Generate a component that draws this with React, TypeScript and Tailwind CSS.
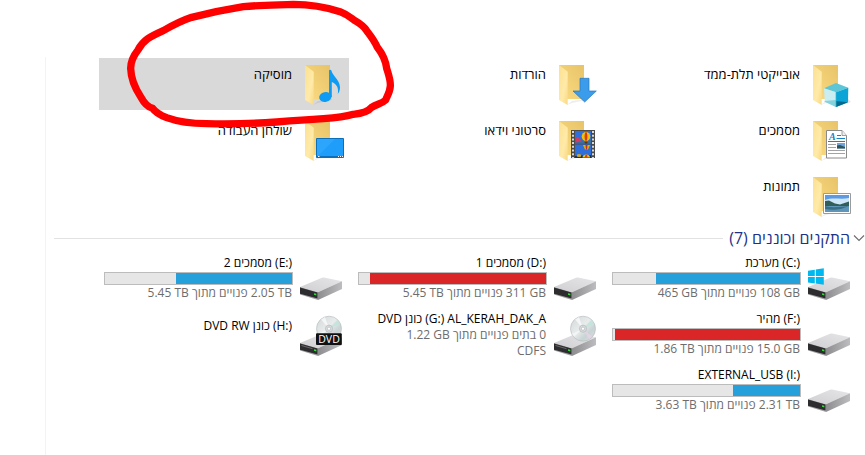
import { useState, type ReactNode } from 'react';

interface Folder {
  id: string;
  name: string;
  overlay: ReactNode;
}

interface Drive {
  id: string;
  // latin part of the label, always kept left-to-right
  label: string;
  name?: string;
  icon: ReactNode;
  free?: string;
  total?: string;
  used?: number;
  full?: boolean;
  fileSystem?: string;
}

function FolderIcon({ children }: { children: ReactNode }) {
  return (
    <svg className="size-12 shrink-0" viewBox="0 0 48 48" fill="none" direction="ltr" aria-hidden="true">
      <defs>
        <linearGradient id="folder-back" x1="1" y1="0" x2="0" y2="1">
          <stop offset="0" stopColor="#e8c368" />
          <stop offset="1" stopColor="#fbdc83" />
        </linearGradient>
        <linearGradient id="folder-flap" x1="0" y1="0" x2="1" y2="1">
          <stop offset="0" stopColor="#fbe08f" />
          <stop offset="0.6" stopColor="#ffeaa9" />
          <stop offset="1" stopColor="#f8d983" />
        </linearGradient>
      </defs>
      <path d="M16 45l5-4 14-2v1l-14 3z" fill="#000" opacity="0.07" />
      <path d="M8 5h25v34H8z" fill="url(#folder-back)" />
      <path d="M8 5l8.7 6.7V45L8 40z" fill="url(#folder-flap)" />
      {children}
    </svg>
  );
}

function CubeOverlay() {
  return (
    <g>
      <path d="M31 47l15-5-3-3z" fill="#000" opacity="0.1" />
      <path d="M31 23l12.3 4.7L31 32.3 19 28.3z" fill="#5cc5d6" />
      <path d="M19 28.3l12 4V47l-11.3-5.3z" fill="#c9edf1" />
      <path d="M43.3 27.7L31 32.3V47l12-4.7z" fill="#0aa5d6" />
      <path d="M31 41l12 1.3L31 47z" fill="#036a8f" />
      <path d="M19.5 41L31 40v7l-11.3-5.3z" fill="#83d2de" />
      <path d="M31 32.3V47" stroke="#3bb4cb" strokeWidth="0.7" />
    </g>
  );
}

function ArrowOverlay() {
  return (
    <path
      d="M29 18.3h9V31h7.3L33.7 42 22 31h7z"
      fill="#3b9cec"
      stroke="#2577bd"
      strokeWidth="0.7"
    />
  );
}

function MusicOverlay() {
  return (
    <g fill="#0c9bf5">
      <ellipse cx="28.3" cy="37" rx="6.2" ry="4.8" transform="rotate(-12 28.3 37)" />
      <path d="M32 10.5c.3-1 1.9-1 2.4 0 .6 4.5 8.6 9.5 8.6 17 0 3-1 5-2.2 6.5 1.2-6.5-1.5-10-6-12V37H32z" />
    </g>
  );
}

function DocumentOverlay() {
  return (
    <g>
      <path d="M21.5 14.5H37l4.5 5V42h-20z" fill="#fff" stroke="#8a8a8a" strokeWidth="1" />
      <path d="M37 14.5v5h4.5" fill="#eee" stroke="#8a8a8a" strokeWidth="0.8" />
      <text x="24" y="24" fontSize="10" fontFamily="Liberation Serif, serif" fontStyle="italic" fontWeight="700" fill="#1583c9">
        A
      </text>
      <path d="M32 19.5h4M31.5 22.5H40M23 25.5h17" stroke="#1583c9" strokeWidth="1" />
      <path d="M23 28.5h8M23 31.5h8M23 34.5h17M23 37.5h17" stroke="#999" strokeWidth="0.9" />
      <path d="M32 27h8v5.5h-8z" fill="#6fa3dc" />
      <path d="M32 29.5l3-.5 5 2v1.5h-8z" fill="#2c555c" />
    </g>
  );
}

function VideoOverlay() {
  return (
    <g>
      <path d="M20 14h24v28H20z" fill="#4a4a4a" />
      <path d="M24 15h16v12.5H24zM24 28.5h16V42H24z" fill="#2f6fdb" />
      <path d="M24 23c4 1 8 3 16 1v3.5H24z" fill="#3a6f9a" />
      <path d="M22 15v27M42 15v27" stroke="#e8e8e8" strokeWidth="1.8" strokeDasharray="2 1.7" />
      <ellipse cx="35" cy="20.5" rx="4.3" ry="4.5" fill="#f2c200" />
      <path d="M34.3 16.2c-1 3-1 6 0 8.5h1.4c1-2.5 1-5.500 0-8.500z" fill="#d83a1c" />
      <path d="M25 22l2.5-1 3 4.5-6 1z" fill="#cf3d66" />
      <path d="M33.5 26h3l-.5 1.5h-2z" fill="#5c3410" />
      <path d="M32 29h7l-2 4.5h-3z" fill="#e0b000" />
      <path d="M34.5 29h2l-.5 4.5h-1z" fill="#c42b1c" />
      <path d="M24 40l6-1 4 1 6-1v3H24z" fill="#17345f" />
      <path d="M31.5 41.5c0-4 7.5-4 7.5 0z" fill="#f2c200" />
      <path d="M34 41.5c0-4 2.5-4 2.5 0z" fill="#d83a1c" />
      <ellipse cx="28" cy="39.5" rx="2.3" ry="1.5" fill="#d0a720" />
    </g>
  );
}

function DesktopOverlay() {
  return (
    <g>
      <path d="M19.5 22.5h27v19h-27z" fill="#1e9dfa" stroke="#0b6fba" strokeWidth="1" />
      <path d="M20 41V23h18z" fill="#35abff" opacity="0.6" />
      <path d="M20 40.5h26" stroke="#0b6fba" strokeWidth="1" />
      <path d="M21 40.5h1.5M41 40.5h1M43 40.5h1M45 40.5h1" stroke="#fff" strokeWidth="1" />
    </g>
  );
}

function PictureOverlay() {
  return (
    <g>
      <path d="M18.5 21.5h27v20h-27z" fill="#fff" stroke="#9b9b9b" strokeWidth="1" />
      <path d="M20 23h24v17H20z" fill="#5c9be4" />
      <path d="M20 28c8-3 16 0 24-2v8H20z" fill="#cfe5f8" />
      <path d="M20 29l4-.5 6 3 5 1 6-2 3-1v5H20z" fill="#2f5f58" />
      <path d="M20 34h24v6H20z" fill="#5f95b8" />
      <path d="M20 34c6 2 14 1 24 0l-8 3c-6 1-10 1-16 0z" fill="#3b6f86" />
    </g>
  );
}

function WindowsLogo() {
  return (
    <path
      d="M3 18.7l6.8-1v6.3H3zM10.8 17.5l8-1.2V24h-8zM3 25h6.8v6.5L3 30.5zM10.8 25h8v7.8l-8-1.2z"
      fill="#00b8f0"
    />
  );
}

function DriveIcon({ variant }: { variant?: 'windows' | 'disc' | 'dvd' }) {
  const hasDisc = variant === 'disc' || variant === 'dvd';

  return (
    <svg className="mt-1.5 size-12 shrink-0" viewBox="0 0 48 48" fill="none" aria-hidden="true">
      <defs>
        <linearGradient id="drive-top" x1="0" y1="1" x2="1" y2="0">
          <stop offset="0" stopColor="#cfcfd2" />
          <stop offset="1" stopColor="#e6e6e9" />
        </linearGradient>
        <linearGradient id="drive-side" x1="0" y1="0" x2="1" y2="0">
          <stop offset="0" stopColor="#8d8d90" />
          <stop offset="1" stopColor="#bdbdc1" />
        </linearGradient>
        <linearGradient id="disc" x1="0" y1="0" x2="1" y2="1">
          <stop offset="0" stopColor="#d3d6d8" />
          <stop offset="0.45" stopColor="#e9ecec" />
          <stop offset="0.7" stopColor="#c8d3d4" />
          <stop offset="1" stopColor="#dedfe2" />
        </linearGradient>
      </defs>
      <path d="M3 35l22-9.3q1-.4 2-.2l18 3.8-24 11z" fill="url(#drive-top)" />
      <path d="M21 40.3l24-11V37L21 48z" fill="url(#drive-side)" />
      <path d="M3 35l18 5.3V48L3 42.5z" fill="#a0a0a3" />
      <path d="M3 35.5l17.5 5v6L3 41.8z" fill="#2d2d2f" />
      {hasDisc && <path d="M4.5 37.5l11 3.2" stroke="#77777a" strokeWidth="0.8" />}
      <path d="M17 41.2l2.3.6v1.6l-2.3-.6z" fill="#35e03a" />
      {variant === 'windows' && <WindowsLogo />}
      {hasDisc && (
        <g>
          <circle cx="32" cy="20.7" r="12.5" fill="url(#disc)" stroke="#b4b8ba" strokeWidth="0.6" />
          <path d="M32 20.7L24 11.5l4-2.5z" fill="#fff" opacity="0.65" />
          <path d="M32 20.7L40.5 12l2.5 3.5z" fill="#b9e6da" opacity="0.75" />
          <path d="M32 20.7l9 8-3 2.5z" fill="#e9d3ea" opacity="0.7" />
          <path d="M32 20.7l-11 5 2 3z" fill="#fff" opacity="0.5" />
          <circle cx="32" cy="20.7" r="3.6" fill="#d9dcdd" stroke="#aeb2b4" strokeWidth="0.6" />
          <circle cx="32" cy="20.7" r="1.6" fill="#fff" stroke="#9fa3a5" strokeWidth="0.5" />
        </g>
      )}
      {variant === 'dvd' && (
        <g>
          <rect x="19" y="25.3" width="25.8" height="11.7" rx="1" fill="#111" />
          <text x="32" y="35" textAnchor="middle" fontSize="10.5" fontFamily="Open Sans, sans-serif" fill="#fff">
            DVD
          </text>
        </g>
      )}
    </svg>
  );
}

// Hand-drawn marker loop around the music folder
function MarkerLoop() {
  return (
    <svg
      className="pointer-events-none absolute -top-[58px] left-[21px] z-10 h-[130px] w-[290px]"
      viewBox="0 0 870 390"
      fill="none"
      aria-hidden="true"
    >
      <path
        d="M370 20C420 15 470 15 520 13C580 13 620 22 660 35C685 45 692 53 705 62C722 72 732 78 740 92C758 115 765 125 772 142C790 165 797 182 800 205C806 225 812 240 811 258C810 275 803 285 797 300C785 312 770 312 755 322C745 335 725 341 700 343C670 352 640 354 610 356C560 359 520 362 470 366C400 371 330 373 260 371C215 371 170 364 140 353C115 343 105 335 98 325C80 320 70 305 62 290C42 260 33 235 32 205C32 180 42 165 54 150C70 120 90 110 130 92C165 72 185 62 215 52C270 38 320 28 370 20Z"
        stroke="#ff0000"
        strokeWidth="22"
        strokeLinejoin="round"
      />
    </svg>
  );
}

const folders: Folder[] = [
  { id: '3d', name: 'אובייקטי תלת-ממד', overlay: <CubeOverlay /> },
  { id: 'downloads', name: 'הורדות', overlay: <ArrowOverlay /> },
  { id: 'music', name: 'מוסיקה', overlay: <MusicOverlay /> },
  { id: 'documents', name: 'מסמכים', overlay: <DocumentOverlay /> },
  { id: 'videos', name: 'סרטוני וידאו', overlay: <VideoOverlay /> },
  { id: 'desktop', name: 'שולחן העבודה', overlay: <DesktopOverlay /> },
  { id: 'pictures', name: 'תמונות', overlay: <PictureOverlay /> },
];

const drives: Drive[] = [
  { id: 'c', label: '(C:)', name: 'מערכת', icon: <DriveIcon variant="windows" />, free: '108 GB', total: '465 GB', used: 77 },
  { id: 'd', label: '(D:)', name: 'מסמכים 1', icon: <DriveIcon />, free: '311 GB', total: '5.45 TB', used: 94, full: true },
  { id: 'e', label: '(E:)', name: 'מסמכים 2', icon: <DriveIcon />, free: '2.05 TB', total: '5.45 TB', used: 62 },
  { id: 'f', label: '(F:)', name: 'מהיר', icon: <DriveIcon />, free: '15.0 GB', total: '1.86 TB', used: 99, full: true },
  { id: 'g', label: '(G:) AL_KERAH_DAK_A', name: 'כונן DVD', icon: <DriveIcon variant="disc" />, free: '0 בתים', total: '1.22 GB', fileSystem: 'CDFS' },
  { id: 'h', label: '(H:)', name: 'כונן DVD RW', icon: <DriveIcon variant="dvd" /> },
  { id: 'i', label: 'EXTERNAL_USB (I:)', icon: <DriveIcon />, free: '2.31 TB', total: '3.63 TB', used: 36 },
];

function FolderTile({ folder, selected, onSelect }: { folder: Folder; selected: boolean; onSelect: () => void }) {
  return (
    <div className="relative">
      <button
        type="button"
        onClick={onSelect}
        aria-pressed={selected}
        className={`flex w-full gap-1 px-1 py-0.5 text-right ${selected ? 'bg-[#d9d9d9]' : ''}`}
      >
        <FolderIcon>{folder.overlay}</FolderIcon>
        <span className="min-w-0 flex-1 pt-1.5 pr-px text-[13px] leading-4">{folder.name}</span>
      </button>
      {folder.id === 'music' && <MarkerLoop />}
    </div>
  );
}

function DriveTile({ drive }: { drive: Drive }) {
  return (
    <button type="button" className="flex h-14 w-full items-start gap-1 pr-1 pl-[5px] text-right">
      {drive.icon}
      <span className={`min-w-0 flex-1 leading-4 ${drive.free ? 'pt-[9px]' : 'pt-4'}`}>
        <span className="block pr-px whitespace-nowrap">
          <bdi dir="ltr">{drive.label}</bdi> {drive.name}
        </span>
        {drive.used !== undefined && (
          <span className="mt-px block h-[13px] border border-[#bcbcbc] bg-[#e6e6e6]">
            <span
              className={`block h-full ${drive.full ? 'bg-[#da2626]' : 'bg-[#26a0da]'}`}
              style={{ width: `${drive.used}%` }}
            />
          </span>
        )}
        {drive.free && (
          <span className="block pr-px whitespace-nowrap text-[#6d6d6d]">
            <bdi>{drive.free}</bdi> פנויים מתוך <bdi dir="ltr">{drive.total}</bdi>
          </span>
        )}
        {drive.fileSystem && <span className="block pr-px text-[#6d6d6d]">{drive.fileSystem}</span>}
      </span>
    </button>
  );
}

export default function App() {
  const [selected, setSelected] = useState('music');
  const [open, setOpen] = useState(true);

  return (
    <div
      dir="rtl"
      className="flex min-h-screen bg-white pt-[57px] font-['Open_Sans','Noto_Sans',sans-serif] text-xs text-black"
    >
      <main className="min-w-0 flex-1 border-l border-[#f3f3f3] pt-px pl-2">
        <section className="grid grid-cols-[repeat(auto-fill,250px)] gap-1 pr-2">
          {folders.map((folder) => (
            <FolderTile
              key={folder.id}
              folder={folder}
              selected={folder.id === selected}
              onSelect={() => setSelected(folder.id)}
            />
          ))}
        </section>

        <section>
          <h2 className="mt-2 flex h-4 items-center gap-1.5">
            <button
              type="button"
              onClick={() => setOpen(!open)}
              aria-expanded={open}
              className="flex items-center gap-[3px] text-base leading-4 text-[#1e3287]"
            >
              <svg className="h-2 w-3" viewBox="0 0 12 8" fill="none" aria-hidden="true">
                <path d="M1 1.5l5 5 5-5" stroke="#6b6b6b" strokeWidth="1.1" />
              </svg>
              התקנים וכוננים (7)
            </button>
            <span className="h-px flex-1 bg-[#e2e2e2]" />
          </h2>
          {open && (
            <div className="grid grid-cols-[repeat(auto-fill,250px)] gap-x-1 pr-2">
              {drives.map((drive) => (
                <DriveTile key={drive.id} drive={drive} />
              ))}
            </div>
          )}
        </section>
      </main>
      <aside className="w-[45px] shrink-0" />
    </div>
  );
}
